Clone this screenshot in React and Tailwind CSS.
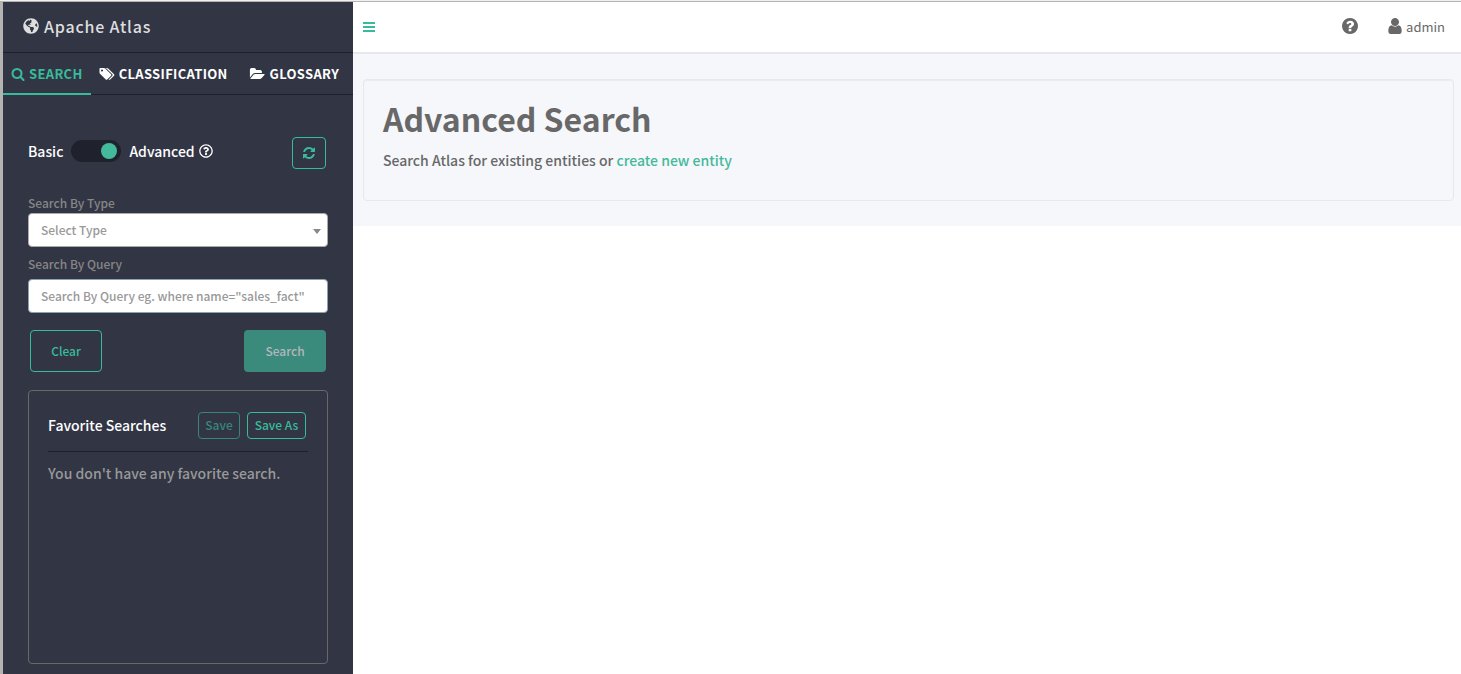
import { useState } from "react";
import { FaGlobeAmericas, FaRegQuestionCircle } from "react-icons/fa";

const icons = {
  search: {
    box: "0 0 1792 1792",
    d: "M1216 832q0-185-131.5-316.5t-316.5-131.5-316.5 131.5-131.5 316.5 131.5 316.5 316.5 131.5 316.5-131.5 131.5-316.5zm512 832q0 52-38 90t-90 38q-54 0-90-38l-343-342q-179 124-399 124-143 0-273.5-55.5t-225-150-150-225-55.5-273.5 55.5-273.5 150-225 225-150 273.5-55.5 273.5 55.5 225 150 150 225 55.5 273.5q0 220-124 399l343 343q37 37 37 90z",
  },
  tags: {
    box: "128 0 1920 1792",
    d: "M576 448q0-53-37.5-90.5t-90.5-37.5-90.5 37.5-37.5 90.5 37.5 90.5 90.5 37.5 90.5-37.5 37.5-90.5zm1067 576q0 53-37 90l-491 492q-39 37-91 37-53 0-90-37l-715-716q-38-37-64.5-101t-26.5-117v-416q0-52 38-90t90-38h416q53 0 117 26.5t102 64.5l715 714q37 39 37 91zm384 0q0 53-37 90l-491 492q-39 37-91 37-36 0-59-14t-53-45l470-470q37-37 37-90 0-52-37-91l-715-714q-38-38-102-64.5t-117-26.5h224q53 0 117 26.5t102 64.5l715 714q37 39 37 91z",
  },
  folder: {
    box: "0 0 1943 1792",
    d: "M1943 952q0 31-31 66l-336 396q-43 51-120.5 86.5t-143.5 35.5h-1088q-34 0-60.5-13t-26.5-43q0-31 31-66l336-396q43-51 120.5-86.5t143.5-35.5h1088q34 0 60.5 13t26.5 43zm-343-344v160h-832q-94 0-197 47.5t-164 119.5l-337 396-5 6q0-4-.5-12.5t-.5-12.5v-960q0-92 66-158t158-66h320q92 0 158 66t66 158v32h544q92 0 158 66t66 158z",
  },
  refresh: {
    box: "128 128 1536 1536",
    d: "M1639 1056q0 5-1 7-64 268-268 434.5t-478 166.5q-146 0-282.5-55t-243.5-157l-129 129q-19 19-45 19t-45-19-19-45v-448q0-26 19-45t45-19h448q26 0 45 19t19 45-19 45l-137 137q71 66 161 102t187 36q134 0 250-65t186-179q11-17 53-117 8-23 30-23h192q13 0 22.5 9.5t9.5 22.5zm25-800v448q0 26-19 45t-45 19h-448q-26 0-45-19t-19-45 19-45l138-138q-148-137-349-137-134 0-250 65t-186 179q-11 17-53 117-8 23-30 23h-199q-13 0-22.5-9.5t-9.5-22.5v-7q65-268 270-434.5t480-166.5q146 0 284 55.5t245 156.5l130-129q19-19 45-19t45 19 19 45z",
  },
  help: {
    box: "128 128 1536 1536",
    d: "M1024 1376v-192q0-14-9-23t-23-9h-192q-14 0-23 9t-9 23v192q0 14 9 23t23 9h192q14 0 23-9t9-23zm256-672q0-88-55.5-163t-138.5-116-170-41q-243 0-371 213-15 24 8 42l132 100q7 6 19 6 16 0 25-12 53-68 86-92 34-24 86-24 48 0 85.5 26t37.5 59q0 38-20 61t-68 45q-63 28-115.5 86.5t-52.5 125.5v36q0 14 9 23t23 9h192q14 0 23-9t9-23q0-19 21.5-49.5t54.5-49.5q32-18 49-28.5t46-35 44.5-48 28-60.5 12.5-81zm384 192q0 209-103 385.5t-279.5 279.5-385.5 103-385.5-103-279.5-279.5-103-385.5 103-385.5 279.5-279.5 385.5-103 385.5 103 279.5 279.5 103 385.5z",
  },
  user: {
    box: "256 128 1280 1536",
    d: "M1536 1399q0 109-62.5 187t-150.5 78h-854q-88 0-150.5-78t-62.5-187q0-85 8.5-160.5t31.5-152 58.5-131 94-89 134.5-34.5q131 128 313 128t313-128q76 0 134.5 34.5t94 89 58.5 131 31.5 152 8.5 160.5zm-256-887q0 159-112.5 271.5t-271.5 112.5-271.5-112.5-112.5-271.5 112.5-271.5 271.5-112.5 271.5 112.5 112.5 271.5z",
  },
};

function Icon({ name, className }) {
  return (
    <svg
      viewBox={icons[name].box}
      fill="currentColor"
      aria-hidden="true"
      className={className}
    >
      <path d={icons[name].d} />
    </svg>
  );
}

function Sidebar() {
  const [advanced, setAdvanced] = useState(true);
  const [query, setQuery] = useState("");

  return (
    <aside className="w-[353px] shrink-0 border-l-3 border-[#b3b3b3] bg-[#323544]">
      <div className="flex h-[51px] items-center gap-[5px] border-b border-[#1d1f2b] pb-[2px] pl-5 text-[#dedede]">
        <FaGlobeAmericas className="size-4" />
        <span className="text-base font-medium tracking-wider">
          Apache Atlas
        </span>
      </div>

      <nav className="flex h-[42px] border-b border-[#1d1f2b] text-[13px] font-bold tracking-wide text-white">
        <a
          href="#search"
          className="-mb-px flex items-center gap-1 border-b-2 border-[#38bb9b] px-2 pt-[2px] text-[#38bb9b]"
        >
          <Icon name="search" className="size-[14px]" />
          SEARCH
        </a>
        <a href="#classification" className="flex items-center gap-1 px-2">
          <Icon name="tags" className="h-[14px] w-4" />
          CLASSIFICATION
        </a>
        <a
          href="#glossary"
          className="ml-auto flex items-center gap-1 pr-[14px]"
        >
          <Icon name="folder" className="h-[14px] w-4" />
          GLOSSARY
        </a>
      </nav>

      <div className="px-[25px] pt-[42px] pb-[10px]">
        <div className="flex h-8 items-start justify-between text-sm font-medium text-white">
          <div className="flex h-7 items-center">
            <label htmlFor="mode">Basic</label>
            <input
              id="mode"
              type="checkbox"
              role="switch"
              aria-label="Advanced search"
              checked={advanced}
              onChange={(e) => setAdvanced(e.target.checked)}
              className="mx-2 flex h-[22px] w-[50px] appearance-none items-center rounded-full bg-[#1f212c] px-1 before:size-4 before:rounded-full before:bg-[#45b99b] checked:justify-end"
            />
            <span>Advanced</span>
            <FaRegQuestionCircle className="ml-1 size-[14px]" />
          </div>
          <button
            aria-label="Refresh"
            className="mr-[2px] flex h-8 w-[34px] items-center justify-center rounded border border-[#38bb9b] text-[#38bb9b]"
          >
            <Icon name="refresh" className="size-3" />
          </button>
        </div>

        <form
          className="mt-6 text-xs font-medium text-[#868686]"
          onSubmit={(e) => e.preventDefault()}
        >
          <label htmlFor="type" className="block h-5 leading-5">
            Search By Type
          </label>
          <div className="relative">
            <select
              id="type"
              className="block h-[34px] w-full appearance-none rounded border border-[#aaaaaa] bg-white px-3 text-[#999999]"
            >
              <option>Select Type</option>
            </select>
            <span className="pointer-events-none absolute top-4 right-[7px] border-x-4 border-t-5 border-x-transparent border-t-[#888888]" />
          </div>
          <label htmlFor="query" className="mt-[7px] block h-[25px] leading-5">
            Search By Query
          </label>
          <input
            id="query"
            type="text"
            value={query}
            onChange={(e) => setQuery(e.target.value)}
            placeholder='Search By Query eg. where name="sales_fact"'
            className="block h-[34px] w-full rounded border border-[#8ba3ac] bg-white px-3 pb-[2px] placeholder:text-[#999999]"
          />
          <div className="mt-[17px] flex justify-between px-[2px]">
            <button
              type="button"
              onClick={() => setQuery("")}
              className="h-[42px] min-w-[72px] rounded border border-[#38bb9b] px-5 text-[#38bb9b]"
            >
              Clear
            </button>
            <button
              type="submit"
              className="h-[42px] min-w-[82px] rounded bg-[#3a8b7b] px-5 text-[#b4b6bd]"
            >
              Search
            </button>
          </div>
        </form>

        <section className="mt-[18px] min-h-[274px] rounded border border-[#686868] px-[19px] pt-[21px]">
          <div className="flex h-10 items-start border-b border-[#1d1f2b] text-xs font-medium">
            <h2 className="text-sm leading-[26px] text-white">
              Favorite Searches
            </h2>
            <button
              disabled
              className="mr-[7px] ml-auto h-[27px] min-w-[42px] rounded border border-[#358778] px-[6px] pb-[2px] text-[#358778]"
            >
              Save
            </button>
            <button className="mr-[2px] h-[27px] min-w-[59px] rounded border border-[#38bb9b] px-[6px] pb-[2px] text-[#38bb9b]">
              Save As
            </button>
          </div>
          <p className="mt-[11px] text-sm font-medium text-[#999999]">
            You don't have any favorite search.
          </p>
        </section>
      </div>
    </aside>
  );
}

export default function App() {
  return (
    <div className="flex min-h-screen flex-col bg-white font-['Noto_Sans_CJK_SC',sans-serif] text-[#686868]">
      <div className="h-[2px] border-b border-[#b3b3b3] bg-[#f0f0f0]" />
      <div className="flex flex-1">
        <Sidebar />
        <main className="min-w-0 flex-1">
          <header className="flex h-[52px] items-center border-b-2 border-[#e7e8ee] px-[10px] pr-4">
            <button
              aria-label="Toggle sidebar"
              className="flex w-3 flex-col gap-[2px]"
            >
              <span className="h-[2px] bg-[#38bb9b]" />
              <span className="h-[2px] bg-[#38bb9b]" />
              <span className="h-[2px] bg-[#38bb9b]" />
            </button>
            <div className="ml-auto flex items-center gap-[30px]">
              <a href="#help" aria-label="Help" className="pb-[2px]">
                <Icon name="help" className="size-4" />
              </a>
              <a href="#user" className="flex items-center gap-1">
                <Icon name="user" className="mb-[2px] h-4 w-[14px]" />
                <span className="text-[13px]">admin</span>
              </a>
            </div>
          </header>
          <div className="bg-[#f5f7fb] pt-[25px] pr-[7px] pb-[25px] pl-[10px]">
            <section className="min-h-[122px] rounded border border-[#e6e8ec] px-[19px] pt-[18px] shadow-[inset_0_1px_1px_rgba(0,0,0,0.05)]">
              <h1 className="text-[32px] leading-10 font-bold">
                Advanced Search
              </h1>
              <p className="mt-3 text-sm font-medium">
                Search Atlas for existing entities or{" "}
                <a href="#create" className="text-[#45b99b]">
                  create new entity
                </a>
              </p>
            </section>
          </div>
        </main>
      </div>
    </div>
  );
}
